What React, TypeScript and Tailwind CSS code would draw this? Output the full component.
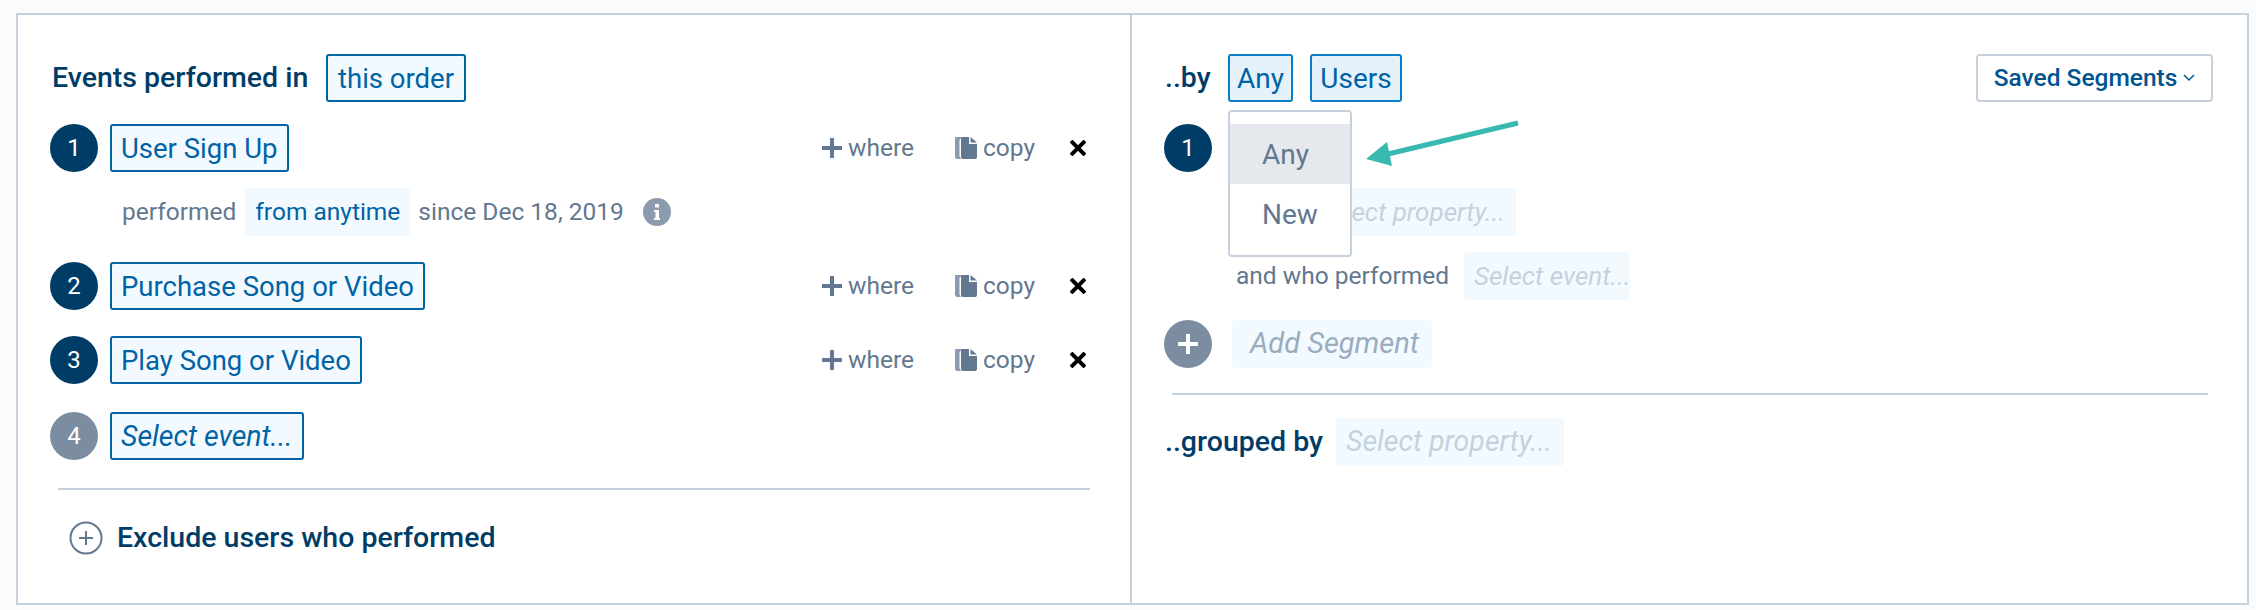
import React from 'react';

const FONT = "font-['Roboto',sans-serif]";

const Circle = ({ n, grey }: { n: React.ReactNode; grey?: boolean }) => (
  <div className={`h-[48px] w-[48px] rounded-full flex items-center justify-center text-white text-[24px] shrink-0 ${grey ? 'bg-[#7c8da1]' : 'bg-[#003d66]'}`}>
    {n}
  </div>
);

const Outlined = ({ children, italic, className = '' }: { children: React.ReactNode; italic?: boolean; className?: string }) => (
  <div className={`h-[48px] px-[9px] pt-[2px] border-2 border-[#0063a5] rounded-[3px] bg-[#f3faff] text-[#0063a5] flex items-center whitespace-nowrap ${italic ? 'italic text-[28.5px]' : 'text-[27.5px]'} ${className}`}>
    {children}
  </div>
);

const Ghost = ({ children, className = '' }: { children: React.ReactNode; className?: string }) => (
  <div className={`h-[48px] rounded-[3px] bg-[#f3faff] flex items-center whitespace-nowrap ${className}`}>
    {children}
  </div>
);

const Actions = () => (
  <div className="ml-auto flex items-center text-[#627890] text-[24.5px]">
    <svg width="20" height="20" viewBox="0 0 20 20" className="mr-[6px]">
      <path d="M8 0h4v8h8v4h-8v8H8v-8H0V8h8z" fill="#627890" />
    </svg>
    <span className="w-[66px]">where</span>
    <svg width="22" height="22" viewBox="0 0 22 22" className="ml-[41px] mr-[6px]">
      <path d="M1 0h5v1.500L4.500 3v16L6 22H2.500Q0 22 0 20V1Q0 0 1 0z" fill="#8b9bad" />
      <path d="M7 0h7v7h8v13q0 2-2 2H8q-2 0-2-2V1q0-1 1-1zM15.500 0 22 5.500H15.500z" fill="#627890" />
    </svg>
    <span className="w-[51px]">copy</span>
    <svg width="16" height="16" viewBox="0 0 16 16" className="ml-[36px]">
      <path d="M1 1l14 14M15 1 1 15" stroke="#000" strokeWidth="4" />
    </svg>
  </div>
);

const EventRow = ({ n, label, className = '' }: { n: number; label: string; className?: string }) => (
  <div className={`flex items-center ${className}`}>
    <Circle n={n} />
    <Outlined className="ml-[12px]">{label}</Outlined>
    <Actions />
  </div>
);

export default function App() {
  return (
    <div className={`w-[2256px] h-[610px] bg-[#fafbfc] pt-[13px] pl-[16px] ${FONT}`}>
      <div className="w-[2233px] h-[592px] border-2 border-[#c5d1dc] bg-white flex">
        {/* events */}
        <div className="w-[1114px] shrink-0 border-r-2 border-[#c5d1dc] pl-[32px] pr-[44px] pt-[39px]">
          <div className="flex items-center h-[48px]">
            <span className="ml-[2px] w-[274px] text-[28.5px] font-medium text-[#003d66]">Events performed in</span>
            <Outlined className="w-[140px] justify-center">this order</Outlined>
          </div>

          <EventRow n={1} label="User Sign Up" className="mt-[22px]" />
          <div className="mt-[16px] ml-[72px] flex items-center text-[24.5px] text-[#627890]">
            <span>performed</span>
            <Ghost className="ml-[9px] px-[10px] text-[#0063a5]">from anytime</Ghost>
            <span className="ml-[8px]">since Dec 18, 2019</span>
            <div className="ml-[19px] w-[28px] h-[28px] rounded-full bg-[#8b9bad] flex items-center justify-center">
              <svg width="6" height="16" viewBox="0 0 6 16">
                <path d="M1 0h4v3.500H1zM0 6h5v8h1v2H0v-2h1.500V8H0z" fill="#fff" />
              </svg>
            </div>
          </div>
          <EventRow n={2} label="Purchase Song or Video" className="mt-[26px]" />
          <EventRow n={3} label="Play Song or Video" className="mt-[26px]" />
          <div className="mt-[28px] flex items-center">
            <Circle n={4} grey />
            <Outlined italic className="ml-[12px]">Select event...</Outlined>
          </div>

          <div className="mt-[28px] ml-[8px] w-[1032px] h-[2px] bg-[#c5d1dc]" />
          <div className="mt-[31px] ml-[19px] flex items-center">
            <svg width="34" height="34" viewBox="0 0 34 34">
              <circle cx="17" cy="17" r="15.500" fill="none" stroke="#627890" strokeWidth="2" />
              <path d="M17 10v14M10 17h14" stroke="#627890" strokeWidth="2" />
            </svg>
            <span className="ml-[14px] text-[28.5px] font-medium text-[#003d66] leading-[34px]">Exclude users who performed</span>
          </div>
        </div>

        {/* segments */}
        <div className="relative flex-1 pl-[32px] pr-[34px] pt-[39px]">
          <div className="flex items-center h-[48px]">
            <span className="ml-[1px] w-[63px] text-[28.5px] font-medium text-[#003d66]">..by</span>
            <div className="w-[65px] h-[48px] pt-[2px] border-2 border-[#0a7fc9] rounded-[3px] bg-[#e6f2fb] text-[#0063a5] text-[28px] flex items-center justify-center">Any</div>
            <div className="ml-[17px] w-[92px] h-[48px] pt-[2px] border-2 border-[#0a7fc9] rounded-[3px] bg-[#e6f2fb] text-[#0063a5] text-[28px] flex items-center justify-center">Users</div>
            <button className="ml-auto h-[48px] w-[237px] border-2 border-[#c5d1dc] rounded-[4px] bg-white text-[#00548f] text-[24.5px] font-medium flex items-center justify-center gap-[6px] whitespace-nowrap">
              Saved Segments
              <svg width="12" height="8" viewBox="0 0 12 8">
                <path d="M1 1l5 5 5-5" fill="none" stroke="#00548f" strokeWidth="1.500" />
              </svg>
            </button>
          </div>

          <div className="mt-[22px]">
            <Circle n={1} />
          </div>
          <Ghost className="mt-[16px] ml-[124px] w-[228px] justify-end pr-[11px]">
            <span className="italic text-[26px] text-[#c5d1dc]">Select property...</span>
          </Ghost>
          <div className="mt-[16px] ml-[72px] flex items-center">
            <span className="w-[228px] text-[24.5px] text-[#627890]">and who performed</span>
            <Ghost className="w-[166px] px-[10px]">
              <span className="italic text-[26px] text-[#c5d1dc]">Select event...</span>
            </Ghost>
          </div>
          <div className="mt-[20px] flex items-center">
            <Circle n={<svg width="20" height="20" viewBox="0 0 20 20"><path d="M8 0h4v8h8v4h-8v8H8v-8H0V8h8z" fill="#fff" /></svg>} grey />
            <Ghost className="ml-[20px] w-[200px] px-[18px]">
              <span className="italic text-[29px] text-[#9aacbd]">Add Segment</span>
            </Ghost>
          </div>
          <div className="mt-[25px] ml-[8px] w-[1036px] h-[2px] bg-[#c5d1dc]" />
          <div className="mt-[23px] flex items-center">
            <span className="ml-[1px] w-[171px] text-[28.5px] font-medium text-[#003d66]">..grouped by</span>
            <Ghost className="w-[228px] px-[10px]">
              <span className="italic text-[28.5px] text-[#c5d1dc]">Select property...</span>
            </Ghost>
          </div>

          {/* open dropdown */}
          <div className="absolute left-[96px] top-[95px] w-[124px] h-[147px] border-2 border-[#c5d1dc] rounded-[4px] bg-white pt-[12px] text-[28px] text-[#627890]">
            <div className="h-[60px] bg-[#e5e8ec] pl-[32px] pt-[2px] flex items-center">Any</div>
            <div className="h-[60px] pl-[32px] pt-[2px] flex items-center">New</div>
          </div>

          {/* annotation arrow */}
          <svg className="absolute left-[234px] top-[100px]" width="156" height="56" viewBox="0 0 156 56">
            <path d="M152 8 L22 39" stroke="#38b9b0" strokeWidth="5" fill="none" />
            <path d="M0 44 L21 27 L26 51 Z" fill="#38b9b0" />
          </svg>
        </div>
      </div>
    </div>
  );
}
